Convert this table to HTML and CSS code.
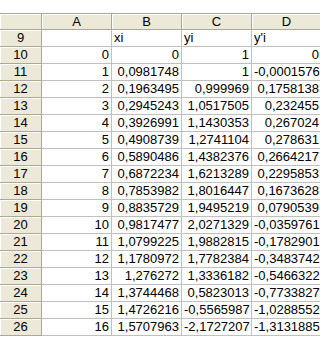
FILE: index.html
```html
<!DOCTYPE html>
<html>
<head>
<meta charset="utf-8">
<link rel="stylesheet" href="styles.css">
</head>
<body>
<div class="top"></div>
<div class="sheet">
  <div class="corner"></div>
  <div class="ch">A</div><div class="ch">B</div><div class="ch">C</div><div class="ch">D</div>

  <div class="rh">9</div><div class="c"></div><div class="c l">xi</div><div class="c l">yi</div><div class="c l">y'i</div>
  <div class="rh">10</div><div class="c">0</div><div class="c">0</div><div class="c">1</div><div class="c">0</div>
  <div class="rh">11</div><div class="c">1</div><div class="c">0,0981748</div><div class="c">1</div><div class="c">-0,0001576</div>
  <div class="rh">12</div><div class="c">2</div><div class="c">0,1963495</div><div class="c">0,999969</div><div class="c">0,1758138</div>
  <div class="rh">13</div><div class="c">3</div><div class="c">0,2945243</div><div class="c">1,0517505</div><div class="c">0,232455</div>
  <div class="rh">14</div><div class="c">4</div><div class="c">0,3926991</div><div class="c">1,1430353</div><div class="c">0,267024</div>
  <div class="rh">15</div><div class="c">5</div><div class="c">0,4908739</div><div class="c">1,2741104</div><div class="c">0,278631</div>
  <div class="rh">16</div><div class="c">6</div><div class="c">0,5890486</div><div class="c">1,4382376</div><div class="c">0,2664217</div>
  <div class="rh">17</div><div class="c">7</div><div class="c">0,6872234</div><div class="c">1,6213289</div><div class="c">0,2295853</div>
  <div class="rh">18</div><div class="c">8</div><div class="c">0,7853982</div><div class="c">1,8016447</div><div class="c">0,1673628</div>
  <div class="rh">19</div><div class="c">9</div><div class="c">0,8835729</div><div class="c">1,9495219</div><div class="c">0,0790539</div>
  <div class="rh">20</div><div class="c">10</div><div class="c">0,9817477</div><div class="c">2,0271329</div><div class="c">-0,0359761</div>
  <div class="rh">21</div><div class="c">11</div><div class="c">1,0799225</div><div class="c">1,9882815</div><div class="c">-0,1782901</div>
  <div class="rh">22</div><div class="c">12</div><div class="c">1,1780972</div><div class="c">1,7782384</div><div class="c">-0,3483742</div>
  <div class="rh">23</div><div class="c">13</div><div class="c">1,276272</div><div class="c">1,3336182</div><div class="c">-0,5466322</div>
  <div class="rh">24</div><div class="c">14</div><div class="c">1,3744468</div><div class="c">0,5823013</div><div class="c">-0,7733827</div>
  <div class="rh">25</div><div class="c">15</div><div class="c">1,4726216</div><div class="c">-0,5565987</div><div class="c">-1,0288552</div>
  <div class="rh">26</div><div class="c">16</div><div class="c">1,5707963</div><div class="c">-2,1727207</div><div class="c">-1,3131885</div>
</div>
</body>
</html>
```
FILE: styles.css
```css
html, body {
  margin: 0;
  padding: 0;
  background: #ffffff;
  overflow: hidden;
  width: 320px;
  height: 338px;
}
body {
  font-family: "Liberation Sans", Arial, sans-serif;
  font-size: 13px;
  color: #000;
}
.top {
  height: 13px;
  background: #ffffff;
}
.sheet {
  display: grid;
  grid-template-columns: 42px 70px 70px 70px 70px;
  grid-template-rows: 16px;
  grid-auto-rows: 17px;
  width: 322px;
  border-top: 1px solid #aca899;
}
.sheet > div {
  box-sizing: border-box;
  line-height: 16px;
  white-space: nowrap;
  overflow: hidden;
}
.corner, .ch {
  background: #ece9d8;
  border-right: 1px solid #aca899;
  border-bottom: 1px solid #aca899;
  box-shadow: inset 1px 1px 0 #ffffff;
  line-height: 15px;
}
.ch {
  text-align: center;
}
.rh {
  background: #ece9d8;
  border-right: 1px solid #aca899;
  border-bottom: 1px solid #aca899;
  box-shadow: inset 1px 1px 0 #ffffff;
  text-align: center;
}
.c {
  border-right: 1px solid #c0c0c0;
  border-bottom: 1px solid #c0c0c0;
  text-align: right;
  padding: 0 2px;
}
.c.l {
  text-align: left;
}
```
